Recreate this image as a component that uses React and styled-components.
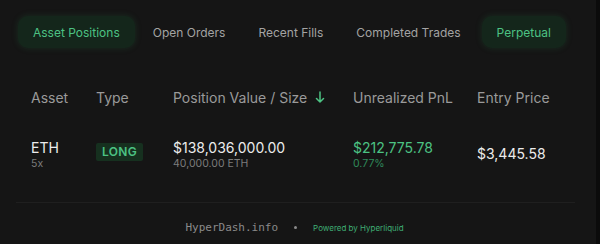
import React from 'react';
import styled, { createGlobalStyle } from 'styled-components';

const GlobalStyle = createGlobalStyle`
  html, body {
    margin: 0;
    padding: 0;
    background: #0b0b0b;
  }
  body {
    font-family: Inter, "Noto Sans", "Liberation Sans", sans-serif;
    -webkit-font-smoothing: antialiased;
  }
`;

const Panel = styled.div`
  width: 596px;
  height: 244px;
  background: #151515;
  display: flex;
  flex-direction: column;
  box-sizing: border-box;
  padding-top: 16px;
`;

const TabBar = styled.div`
  display: flex;
  align-items: center;
  gap: 3px;
  padding-left: 18px;
`;

const Tab = styled.div`
  height: 32px;
  padding: 0 15px;
  display: flex;
  align-items: center;
  flex-shrink: 0;
  white-space: nowrap;
  box-sizing: border-box;
  border-radius: 10px;
  font-size: 12px;
  color: ${(p) => (p.$active ? '#4cc283' : '#a3a3a3')};
  background: ${(p) => (p.$active ? '#14261b' : 'transparent')};
  box-shadow: ${(p) => (p.$active ? '0 0 6px rgba(40, 120, 70, 0.25)' : 'none')};
  margin-left: ${(p) => (p.$push ? '3px' : '0')};
`;

const Table = styled.div`
  display: grid;
  grid-template-columns: 65px 77px 180px 124px auto;
  padding-left: 31px;
  margin-top: 40px;
`;

const HeadCell = styled.div`
  font-size: 14px;
  color: #9a9a9a;
  height: 18px;
  display: flex;
  align-items: center;
  gap: 8px;
`;

const Cell = styled.div`
  margin-top: 33px;
  display: flex;
  flex-direction: column;
  justify-content: ${(p) => (p.$center ? 'center' : 'flex-start')};
  height: 30px;
`;

const Main = styled.div`
  font-size: 14px;
  line-height: 18px;
  color: ${(p) => (p.$green ? '#4cc283' : '#ececec')};
`;

const Sub = styled.div`
  font-size: 10.5px;
  line-height: 14px;
  color: ${(p) => (p.$green ? '#2f8a5a' : '#7c7c7c')};
`;

const Badge = styled.span`
  align-self: flex-start;
  margin-top: 4px;
  padding: 2px 6px;
  background: #16301f;
  color: #4cc283;
  font-size: 12px;
  line-height: 14px;
  font-weight: 600;
  letter-spacing: 0.3px;
  border-radius: 2px;
`;

const Divider = styled.div`
  margin: 33px 21px 0 16px;
  height: 1px;
  background: #1f1f1f;
`;

const Footer = styled.div`
  display: flex;
  align-items: center;
  justify-content: center;
  gap: 15px;
  margin-top: 18px;
  padding-right: 7px;
`;

const Brand = styled.span`
  font-family: "DejaVu Sans Mono", "Liberation Mono", monospace;
  font-size: 11px;
  color: #8a8a8a;
`;

const Dot = styled.span`
  width: 3px;
  height: 3px;
  border-radius: 50%;
  background: #8a8a8a;
  margin: 0 1px;
`;

const Powered = styled.span`
  font-size: 8px;
  color: #3fae74;
`;

const SortArrow = () => (
  <svg width="10" height="12" viewBox="0 0 10 12" fill="none" stroke="#4cc283" strokeWidth="1.5" strokeLinecap="round" strokeLinejoin="round">
    <path d="M5 1v10M1.5 7.5 5 11l3.5-3.5" />
  </svg>
);

export default function App() {
  return (
    <>
      <GlobalStyle />
      <Panel>
        <TabBar>
          <Tab $active>Asset Positions</Tab>
          <Tab>Open Orders</Tab>
          <Tab>Recent Fills</Tab>
          <Tab>Completed Trades</Tab>
          <Tab $active $push>Perpetual</Tab>
        </TabBar>
        <Table>
          <HeadCell>Asset</HeadCell>
          <HeadCell>Type</HeadCell>
          <HeadCell>Position Value / Size <SortArrow /></HeadCell>
          <HeadCell>Unrealized PnL</HeadCell>
          <HeadCell>Entry Price</HeadCell>

          <Cell>
            <Main>ETH</Main>
            <Sub>5x</Sub>
          </Cell>
          <Cell>
            <Badge>LONG</Badge>
          </Cell>
          <Cell>
            <Main>$138,036,000.00</Main>
            <Sub>40,000.00 ETH</Sub>
          </Cell>
          <Cell>
            <Main $green>$212,775.78</Main>
            <Sub $green>0.77%</Sub>
          </Cell>
          <Cell $center>
            <Main>$3,445.58</Main>
          </Cell>
        </Table>
        <Divider />
        <Footer>
          <Brand>HyperDash.info</Brand>
          <Dot />
          <Powered>Powered by Hyperliquid</Powered>
        </Footer>
      </Panel>
    </>
  );
}
